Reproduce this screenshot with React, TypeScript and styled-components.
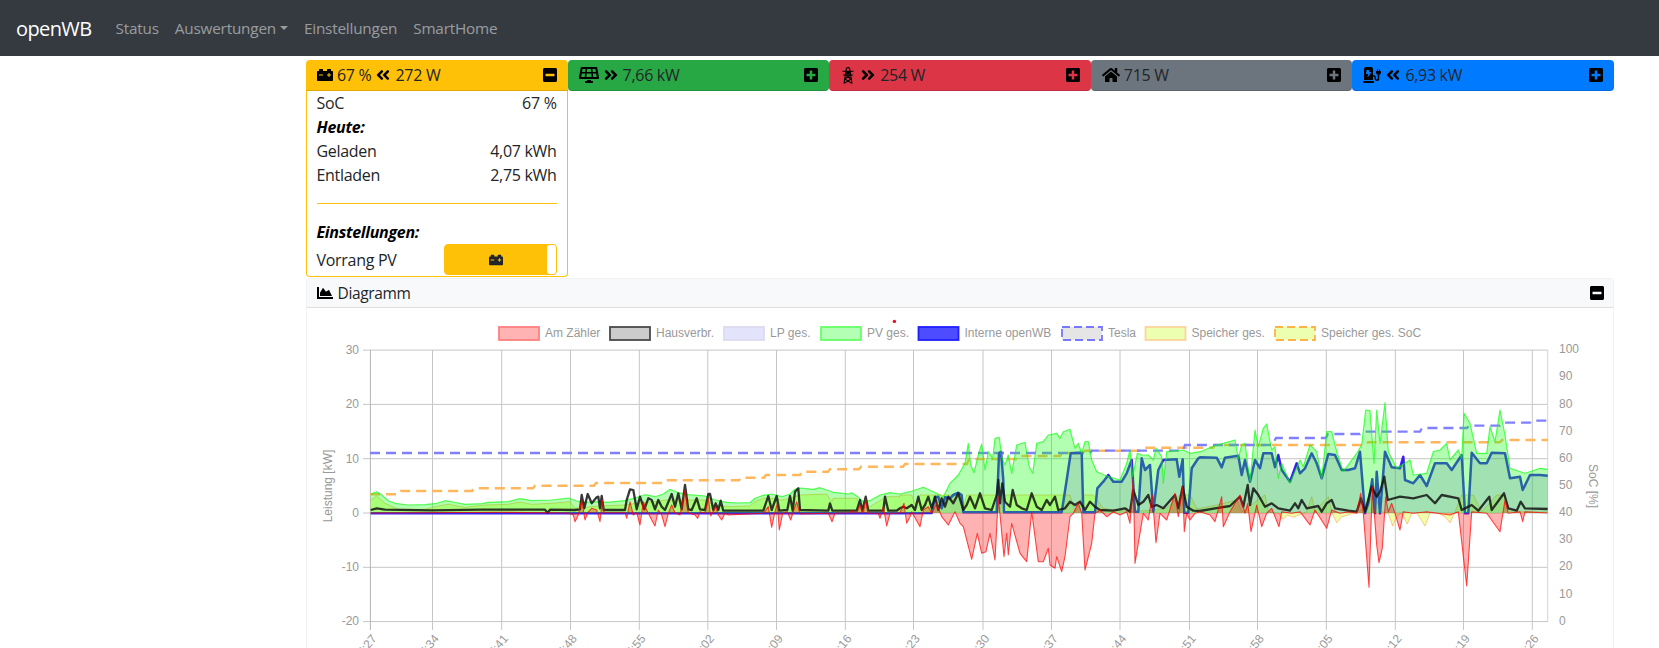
// App.tsx
import React from 'react';
import styled, { createGlobalStyle } from 'styled-components';
import {
  FaAngleDoubleLeft,
  FaAngleDoubleRight,
  FaCarBattery,
  FaChargingStation,
  FaChartArea,
  FaHome,
  FaMinusSquare,
  FaPlusSquare,
  FaSolarPanel,
} from 'react-icons/fa';

const GlobalStyle = createGlobalStyle`
  html, body {
    margin: 0;
    height: 648px;
    overflow: hidden;
    background: #fff;
    font-family: "Open Sans", "Noto Sans", sans-serif;
    font-size: 16px;
    color: #212529;
  }
`;

const Navbar = styled.nav`
  height: 56px;
  background: #343a40;
  display: flex;
  align-items: center;
  padding: 0 16px;
  box-sizing: border-box;
`;

const Brand = styled.span`
  color: #fff;
  font-size: 20px;
  margin-right: 16px;
  letter-spacing: -0.6px;
`;

const NavLink = styled.span`
  color: rgba(255, 255, 255, 0.5);
  padding: 0 8px;
  font-size: 15.3px;
  letter-spacing: -0.2px;
  display: flex;
  align-items: center;
`;

const Caret = styled.i`
  width: 0;
  height: 0;
  margin-left: 4px;
  border-top: 4.8px solid rgba(255, 255, 255, 0.5);
  border-left: 4.8px solid transparent;
  border-right: 4.8px solid transparent;
`;

const Main = styled.main`
  width: 1308px;
  margin: 4px 0 0 306px;
`;

const Tiles = styled.div`
  display: flex;
`;

const TileSlot = styled.div`
  flex: 1;
  min-width: 0;
`;

const Tile = styled.div<{ $bg: string; $open?: boolean }>`
  height: 31px;
  box-sizing: border-box;
  display: flex;
  align-items: center;
  justify-content: space-between;
  padding: 0 10px 0 11px;
  color: #212529;
  background: ${({ $bg }) => $bg};
  border-bottom: 1px solid rgba(0, 0, 0, 0.12);
  border-radius: ${({ $open }) => ($open ? '4px 4px 0 0' : '4px')};
  letter-spacing: -0.3px;
`;

const TileTitle = styled.div`
  display: flex;
  align-items: center;
  gap: 4px;
  svg {
    color: #000;
    flex: none;
  }
`;

const DetailCard = styled.section`
  height: 186px;
  box-sizing: border-box;
  border: 1px solid #ffc107;
  border-top: 0;
  border-radius: 0 0 4px 4px;
  padding: 0 10px 0 9.5px;
  letter-spacing: -0.3px;
`;

const Row = styled.div`
  display: flex;
  justify-content: space-between;
  line-height: 24px;
`;

const RowTitle = styled.div`
  font-weight: 700;
  font-style: italic;
  line-height: 24px;
  color: #000;
`;

const Rule = styled.hr`
  border: 0;
  border-top: 1px solid #ffc107;
  margin: 16px 0 16px;
`;

const ToggleRow = styled.div`
  display: flex;
  justify-content: space-between;
  align-items: center;
  height: 31px;
`;

const Toggle = styled.div`
  width: 113px;
  height: 31px;
  box-sizing: border-box;
  background: #ffc107;
  border: 1px solid #ffc107;
  border-radius: 4px;
  display: flex;
`;

const ToggleIcon = styled.div`
  flex: 1;
  display: flex;
  align-items: center;
  justify-content: center;
  color: #212529;
`;

const ToggleKnob = styled.div`
  width: 9px;
  background: #fff;
  border-radius: 3px;
`;

const ChartCard = styled.section`
  margin-top: 1px;
  border: 1px solid rgba(0, 0, 0, 0.05);
  border-bottom: 0;
  border-radius: 4px 4px 0 0;
`;

const ChartHeader = styled.header`
  height: 29px;
  box-sizing: border-box;
  display: flex;
  align-items: center;
  justify-content: space-between;
  padding: 0 8px 0 9.5px;
  background: #f8f9fa;
  border-bottom: 1px solid #dfdfdf;
  font-size: 15.5px;
  letter-spacing: -0.35px;
`;

const ChartTitle = styled.div`
  display: flex;
  align-items: center;
  gap: 5px;
  svg {
    color: #000;
  }
`;

const ChartSvg = styled.svg`
  display: block;
  font-family: "Liberation Sans", Arial, sans-serif;
  font-size: 12px;
  fill: #999;
`;

// points are read off the 3x crops of the chart, (ox, oy) is the crop origin
const trace = (ox: number, oy: number, pts: number[]): [number, number][] => {
  const out: [number, number][] = [];
  for (let i = 0; i < pts.length; i += 2) out.push([ox + pts[i] / 3, oy + pts[i + 1] / 3]);
  return out;
};

const join = (a: number[], b: number[], c: number[], d: number[]) => [
  ...trace(365, 470, a),
  ...trace(700, 470, b),
  ...trace(900, 380, c),
  ...trace(1200, 380, d),
];

const pv = join(
  [17,72,35,65,50,75,70,92,90,100,130,105,180,104,215,100,240,92,265,96,300,103,350,101,370,97,430,95,465,86,500,92,560,90,610,84,635,93,660,97,700,95,725,97,780,92,810,84,840,74,870,80,895,72,915,58,940,68,970,74,1020,78],
  [45,90,80,97,110,99,150,98,165,85,190,76,215,72,245,80,270,72,285,58,300,54,340,58,360,53,400,67,445,72,455,68,470,78,490,95,510,92,540,75,570,68,600,72],
  [30,335,70,322,100,335,130,350,150,310,175,285,195,250,205,190,212,255,222,278,235,225,245,192,255,270,265,215,278,235,285,175,298,172,305,230,315,255,325,225,335,280,350,195,375,187,388,260,398,280,410,190,430,185,445,165,470,160,480,175,490,155,510,148,525,205,535,190,545,220,555,185,565,185,575,240,590,275,620,288,660,300,680,250,690,210,698,290,712,220,725,225,745,225,760,240,768,205,785,230,790,310,800,215,850,210,870,220,900,215],
  [50,195,105,180,115,235,125,195,135,190,150,305,165,150,175,200,190,145,200,132,215,210,225,200,235,295,245,250,270,310,300,240,310,260,330,195,350,215,365,295,380,155,395,155,410,215,430,275,470,220,485,195,497,90,510,92,522,250,530,90,540,190,555,68,565,215,590,265,630,240,640,285,680,280,700,215,720,210,740,190,750,240,775,210,785,235,792,100,810,130,830,220,860,220,870,140,885,185,900,90,915,165,930,265,975,280,1020,265,1043,268],
);

const interne = join(
  [17,130,1020,130],
  [600,130],
  [95,399,105,352,115,350,125,385,135,352,150,355,160,345,175,338,185,345,190,397,290,397,297,220,303,215,310,300,312,397,485,397,500,300,512,220,545,218,550,397,585,397,592,325,610,305,625,285,640,305,665,305,680,280,695,240,705,395,715,395,725,235,735,270,750,255,760,395,775,270,790,240,830,238,838,290,848,238,853,398,865,398,875,265,895,235,900,232],
  [50,233,65,262,75,233,115,227,125,285,135,240,150,305,165,240,180,265,190,220,215,220,225,262,235,225,245,270,270,305,290,250,300,280,315,265,335,220,350,250,365,295,385,222,405,225,425,270,445,270,465,265,480,215,495,400,505,370,517,298,525,400,530,275,540,400,555,215,575,262,600,265,610,230,615,300,640,310,660,285,680,318,705,250,740,250,755,270,785,225,795,400,805,400,815,218,840,250,860,250,875,218,915,220,930,295,960,290,968,330,990,285,1020,285,1043,287],
);

const speicher = join(
  [17,90,35,78,60,100,100,118,180,118,220,108,250,103,300,112,360,105,430,103,465,96,500,103,560,100,615,95,630,115,700,108,780,105,815,100,870,95,900,90,960,90,1020,90],
  [40,105,90,110,150,108,165,95,190,85,215,85,245,90,270,85,300,75,380,72,395,95,400,85,470,85,480,115,510,110,560,80,600,80],
  [0,345,35,345,50,385,60,345,180,345,190,385,200,345,290,345,300,390,310,345,490,345,510,345,525,395,550,345,580,345,610,385,640,390,700,395,760,390,800,385,840,345,870,345,890,385,900,385],
  [50,375,110,360,125,395,195,345,205,395,235,400,250,418,262,405,280,412,320,395,335,350,345,395,385,350,395,395,410,428,425,410,445,405,470,395,500,385,520,340,545,395,565,400,578,438,590,410,605,398,622,432,635,400,650,398,675,438,690,398,715,400,735,410,750,428,765,396,785,345,820,345,845,395,890,345,915,345,925,395,1043,396],
);

const haus = join(
  [17,120,35,115,60,119,200,121,350,119,540,119,548,128,555,119,630,120,645,118,650,75,658,115,668,72,680,100,695,82,700,80,705,115,710,78,716,120,780,120,785,90,795,58,805,60,815,118,825,80,838,118,850,85,860,90,870,118,880,90,890,110,900,120,920,72,930,110,940,70,950,118,960,45,970,118,980,120,995,85,1005,118,1020,120],
  [25,72,30,72,40,120,47,100,55,120,62,92,70,122,190,122,205,78,215,120,230,78,238,122,262,120,270,78,278,122,285,65,295,55,300,120,385,122,390,100,397,122,470,122,480,90,487,122,497,80,505,122,550,122,555,80,565,122,590,122],
  [0,385,10,380,20,385,35,375,45,390,55,350,65,390,75,375,85,350,95,385,105,350,115,390,125,355,135,380,145,350,160,370,175,340,190,390,200,375,210,350,225,385,240,340,255,385,275,390,290,345,295,300,300,370,307,310,315,365,330,380,338,330,350,375,365,385,380,390,395,340,410,380,425,390,440,360,450,375,465,350,475,390,495,385,510,365,525,375,540,365,555,390,570,365,585,380,600,390,640,392,675,385,690,395,700,330,715,375,730,365,745,345,755,380,770,375,790,385,825,345,835,385,848,320,860,380,880,392,900,393],
  [45,385,90,378,120,350,130,380,143,315,150,375,160,325,175,345,195,380,215,370,235,385,270,392,285,370,295,385,305,360,320,385,355,378,365,395,380,370,395,360,405,385,445,392,470,395,483,355,495,395,515,320,530,350,540,335,553,290,563,360,600,350,640,355,680,345,705,370,725,345,775,355,785,390,815,375,835,392,868,350,875,390,912,340,925,385,950,392,962,365,975,385,1043,387],
);

const zaehler = join(
  [17,129,400,127,610,129,625,135,630,155,640,135,650,90,660,150,668,128,680,115,695,120,705,155,712,90,718,128,780,128,785,145,795,95,805,135,815,128,825,165,835,95,845,120,860,150,870,168,880,120,890,135,900,170,910,130,920,105,930,128,945,135,960,60,970,128,990,135,998,145,1005,125,1020,130],
  [25,85,32,138,47,110,55,135,65,150,75,130,85,135,190,130,205,110,215,172,225,125,232,100,238,180,248,130,262,125,272,150,280,125,290,95,300,132,385,130,396,155,405,130,450,128,455,122,470,130,480,105,490,130,497,90,505,130,535,130,540,145,550,110,560,168,570,130,590,130],
  [0,398,12,370,20,430,30,410,35,395,60,440,70,390,85,380,95,400,110,370,125,410,145,435,165,395,180,430,190,440,215,538,232,460,245,520,258,515,270,460,285,540,295,350,312,530,320,460,325,525,335,430,360,520,380,545,395,395,415,545,430,545,445,505,450,555,465,565,470,530,485,575,495,530,510,410,520,400,535,370,545,400,555,570,575,490,585,400,600,390,620,410,640,395,660,405,680,395,690,430,700,290,705,550,715,490,730,400,745,420,757,345,768,488,780,400,800,420,825,340,835,410,848,320,853,455,860,400,870,420,885,400,900,395],
  [30,405,45,425,65,350,70,440,90,395,120,345,135,400,143,370,153,455,170,375,185,440,200,400,215,385,237,440,245,395,275,400,300,395,330,435,345,390,380,445,395,390,420,400,445,395,470,400,482,340,490,400,507,622,517,320,530,495,537,548,547,505,557,350,565,395,575,370,585,400,600,450,610,395,640,400,680,395,750,405,775,395,800,618,815,395,860,400,900,455,915,360,925,400,960,395,968,425,975,395,1043,399],
);

// SoC values rise in small steps, so these two are drawn as level runs
const steps = (runs: number[]): [number, number][] => {
  const out: [number, number][] = [];
  for (let i = 0; i < runs.length; i += 3) {
    out.push([runs[i], runs[i + 2]], [runs[i + 1], runs[i + 2]]);
  }
  return out;
};

const tesla = steps([370,1090,453,1092,1183,450.7,1185,1272,445,1276,1326,438,1328,1360,434,1363,1420,431.7,1422,1467,428,1469,1500,425.7,1503,1530,422.7,1532,1548,420.7]);
const socOrange = steps([370,399,494.3,401,472,491,474,533,488.3,535,594,485.7,596,664,483,666,739,480.3,741,764,477.7,766,800,475,802,828,471.7,830,859,469.3,861,903,466.7,905,967,464,969,1016,459,1018,1060,456,1062,1083,453,1085,1140,450.7,1142,1213,447.7,1215,1366,445,1368,1500,442.3,1502,1548,440]);

const ZERO = 513;
const toLine = (pts: [number, number][]) => pts.map(([x, y]) => `${x.toFixed(1)},${y.toFixed(1)}`).join(' ');
const toArea = (pts: [number, number][]) =>
  `${pts[0][0].toFixed(1)},${ZERO} ${toLine(pts)} ${pts[pts.length - 1][0].toFixed(1)},${ZERO}`;

const Area: React.FC<{ pts: [number, number][]; fill: string; stroke: string; width?: number }> = ({ pts, fill, stroke, width = 1 }) => (
  <>
    <polygon points={toArea(pts)} fill={fill} />
    <polyline points={toLine(pts)} fill="none" stroke={stroke} strokeWidth={width} strokeLinejoin="round" />
  </>
);

const legend = [
  { x: 499, label: 'Am Zähler', fill: '#ffb3b3', stroke: '#ff8080' },
  { x: 610, label: 'Hausverbr.', fill: '#cccccc', stroke: '#4a4a4a' },
  { x: 724, label: 'LP ges.', fill: '#e3e3fb', stroke: '#dcdcf0' },
  { x: 821, label: 'PV ges.', fill: '#b3ffb3', stroke: '#66ff66' },
  { x: 918.5, label: 'Interne openWB', fill: '#4d4dff', stroke: '#2020ff' },
  { x: 1062, label: 'Tesla', fill: '#e5e5e5', stroke: '#7777ff', dash: '8 4' },
  { x: 1145.5, label: 'Speicher ges.', fill: '#ecffb0', stroke: '#fdd49c' },
  { x: 1275, label: 'Speicher ges. SoC', fill: '#ecffb0', stroke: '#ffb347', dash: '8 4' },
];

const xTicks = [370.4, 432.5, 501.7, 570.5, 639.3, 707.8, 776.5, 845.3, 913.5, 983, 1051.5, 1120, 1189.5, 1257.5, 1326.3, 1395.3, 1463.5, 1532.3];
const xLabels = ['07:27','07:34','07:41','07:48','07:55','08:02','08:09','08:16','08:23','08:30','08:37','08:44','08:51','08:58','09:05','09:12','09:19','09:26'];
const yLeft = [30, 20, 10, 0, -10, -20];
const leftY = (v: number) => ZERO - v * 5.43;
const rightY = (v: number) => 621.9 - v * 2.715;

const Chart: React.FC = () => (
  <ChartSvg width={1306} height={345} viewBox="307 308 1306 345">
    {legend.map((l) => (
      <g key={l.label}>
        <rect x={l.x} y={327} width={40} height={13} fill={l.fill} stroke={l.stroke} strokeWidth={1.8} strokeDasharray={l.dash} />
        <text x={l.x + 46} y={337.4}>{l.label}</text>
      </g>
    ))}
    <circle cx={894.4} cy={321.4} r={1.7} fill="#e0101f" />

    {yLeft.map((v) => (
      <g key={v}>
        <line x1={363} x2={1547.7} y1={leftY(v)} y2={leftY(v)} stroke="#c6c6c6" />
        <text x={359} y={leftY(v) + 3.8} textAnchor="end">{v}</text>
      </g>
    ))}
    {xTicks.map((x, i) => (
      <g key={xLabels[i]}>
        <line x1={x} x2={x} y1={350} y2={630} stroke={i === 0 ? '#b4b4b4' : '#c6c6c6'} />
        <text textAnchor="end" transform={`translate(${x + 7} 639) rotate(-50)`}>{xLabels[i]}</text>
      </g>
    ))}
    <line x1={1547.7} x2={1547.7} y1={350} y2={622} stroke="#d4d4d4" />
    {Array.from({ length: 11 }, (_, i) => i * 10).map((v) => (
      <text key={v} x={1559} y={rightY(v) + 2.8}>{v}</text>
    ))}
    <text textAnchor="middle" transform="translate(332 486) rotate(-90)">Leistung [kW]</text>
    <text textAnchor="middle" transform="translate(1588.5 486) rotate(90)">SoC [%]</text>

    <polyline points={toLine(socOrange)} fill="none" stroke="#ffb65c" strokeWidth={2.4} strokeDasharray="10 6" />
    <Area pts={speicher} fill="rgba(220,255,48,0.4)" stroke="rgba(250,150,40,0.5)" />
    <polyline points={toLine(tesla)} fill="none" stroke="#8080ff" strokeWidth={2.3} strokeDasharray="10 6" />
    <Area pts={interne} fill="rgba(145,45,255,0.2)" stroke="#3a20f0" width={2.5} />
    <Area pts={pv} fill="rgba(0,255,0,0.3)" stroke="rgba(0,255,0,0.65)" width={1.2} />
    <polyline points={toLine(haus)} fill="none" stroke="rgba(20,20,20,0.85)" strokeWidth={2.3} strokeLinejoin="round" />
    <Area pts={zaehler} fill="rgba(255,0,0,0.3)" stroke="rgba(255,0,0,0.7)" width={1.1} />
  </ChartSvg>
);

const PylonIcon: React.FC = () => (
  <svg width="16" height="17" viewBox="-1.5 0 16 17" fill="none" stroke="currentColor" strokeWidth="1.1">
    <path d="M4.5 1.4 6.5.4l2 1M1 4.2h11M1.6 8h9.8M5 1 2.5 16.5M8 1l2.5 15.5M4.4 4.2 9 8l-5.6 4 6.8 4.4M8.6 4.2 4 8l5.6 4-6.8 4.4" />
  </svg>
);

const Sign: React.FC<{ open?: boolean }> = ({ open }) =>
  open ? <FaMinusSquare size={16} color="#000" /> : <FaPlusSquare size={16} color="#000" />;

const App: React.FC = () => (
  <>
    <GlobalStyle />
    <Navbar>
      <Brand>openWB</Brand>
      <NavLink>Status</NavLink>
      <NavLink>Auswertungen<Caret /></NavLink>
      <NavLink>Einstellungen</NavLink>
      <NavLink>SmartHome</NavLink>
    </Navbar>
    <Main>
      <Tiles>
        <TileSlot>
          <Tile $bg="#ffc107" $open>
            <TileTitle><FaCarBattery size={16} /> 67 % <FaAngleDoubleLeft size={16} /> 272 W</TileTitle>
            <Sign open />
          </Tile>
          <DetailCard>
            <Row><span>SoC</span><span>67 %</span></Row>
            <RowTitle>Heute:</RowTitle>
            <Row><span>Geladen</span><span>4,07 kWh</span></Row>
            <Row><span>Entladen</span><span>2,75 kWh</span></Row>
            <Rule />
            <RowTitle>Einstellungen:</RowTitle>
            <ToggleRow>
              <span>Vorrang PV</span>
              <Toggle>
                <ToggleIcon><FaCarBattery size={14} /></ToggleIcon>
                <ToggleKnob />
              </Toggle>
            </ToggleRow>
          </DetailCard>
        </TileSlot>
        <TileSlot>
          <Tile $bg="#28a745">
            <TileTitle><FaSolarPanel size={20} /> <FaAngleDoubleRight size={16} /> 7,66 kW</TileTitle>
            <Sign />
          </Tile>
        </TileSlot>
        <TileSlot>
          <Tile $bg="#dc3545">
            <TileTitle><PylonIcon /> <FaAngleDoubleRight size={16} /> 254 W</TileTitle>
            <Sign />
          </Tile>
        </TileSlot>
        <TileSlot>
          <Tile $bg="#6c757d">
            <TileTitle><FaHome size={18} /> 715 W</TileTitle>
            <Sign />
          </Tile>
        </TileSlot>
        <TileSlot>
          <Tile $bg="#007bff">
            <TileTitle><FaChargingStation size={18} /> <FaAngleDoubleLeft size={16} /> 6,93 kW</TileTitle>
            <Sign />
          </Tile>
        </TileSlot>
      </Tiles>
      <ChartCard>
        <ChartHeader>
          <ChartTitle><FaChartArea size={16} /> Diagramm</ChartTitle>
          <Sign open />
        </ChartHeader>
        <Chart />
      </ChartCard>
    </Main>
  </>
);

export default App;
